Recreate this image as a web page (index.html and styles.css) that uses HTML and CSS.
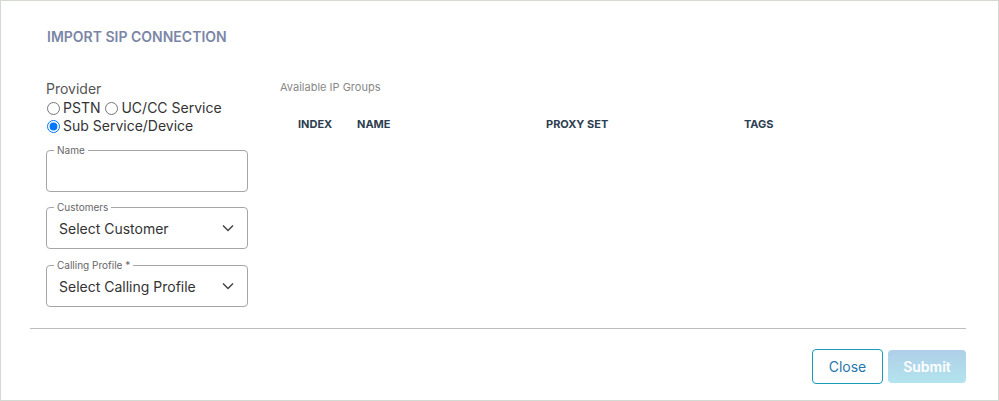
FILE: index.html
```html
<!DOCTYPE html>
<html>
<head>
<meta charset="utf-8">
<link rel="stylesheet" href="styles.css">
</head>
<body>
<div class="dialog">
  <h1 class="title">IMPORT SIP CONNECTION</h1>
  <div class="content">
    <div class="left">
      <div class="provider-label">Provider</div>
      <div class="radios">
        <label class="radio"><input type="radio" name="p">PSTN</label>
        <label class="radio"><input type="radio" name="p">UC/CC Service</label>
        <label class="radio"><input type="radio" name="p" checked>Sub Service/Device</label>
      </div>
      <div class="field field-name">
        <span class="flabel">Name</span>
        <div class="value"></div>
      </div>
      <div class="field field-customers">
        <span class="flabel">Customers</span>
        <div class="value">Select Customer
          <svg class="chev" width="12" height="8" viewBox="0 0 12 8"><path d="M1 1.5 L6 6.5 L11 1.5" fill="none" stroke="#444" stroke-width="1.5"/></svg>
        </div>
      </div>
      <div class="field field-profile">
        <span class="flabel">Calling Profile *</span>
        <div class="value">Select Calling Profile
          <svg class="chev" width="12" height="8" viewBox="0 0 12 8"><path d="M1 1.5 L6 6.5 L11 1.5" fill="none" stroke="#444" stroke-width="1.5"/></svg>
        </div>
      </div>
    </div>
    <div class="right">
      <div class="groups-label">Available IP Groups</div>
      <div class="thead">
        <div class="th">INDEX</div>
        <div class="th">NAME</div>
        <div class="th">PROXY SET</div>
        <div class="th">TAGS</div>
      </div>
    </div>
  </div>
  <div class="divider"></div>
  <div class="footer">
    <button class="btn close">Close</button>
    <button class="btn submit">Submit</button>
  </div>
</div>
</body>
</html>
```
FILE: styles.css
```css
* { box-sizing: border-box; }
html, body { margin: 0; padding: 0; }
body {
  font-family: Inter, "Noto Sans", sans-serif;
  background: #fff;
  width: 999px;
  height: 401px;
}
.dialog {
  width: 999px;
  height: 401px;
  border: 1px solid #d3d9d3;
  padding-top: 27px;
}
.title {
  margin: 0 0 0 46px;
  font-size: 14px;
  font-weight: 600;
  color: #7b86a6;
  line-height: 17px;
}
.content {
  display: flex;
  padding-left: 45px;
  margin-top: 35px;
}
.left {
  width: 202px;
  display: flex;
  flex-direction: column;
  padding-bottom: 21px;
}
.provider-label {
  font-size: 14px;
  color: #555;
  line-height: 18px;
}
.radios {
  width: 200px;
  font-size: 14px;
  color: #333;
  line-height: 18px;
  margin-top: 1px;
}
.radio {
  display: inline-flex;
  align-items: center;
  height: 18px;
  vertical-align: top;
}
.radio input {
  margin: 0 3px 0 1px;
  width: 13px;
  height: 13px;
}
.field {
  position: relative;
  border: 1px solid #a6a6a6;
  border-radius: 4px;
  height: 42px;
  padding: 0 11px 0 12px;
  display: flex;
  align-items: center;
}
.field-name { margin-top: 15px; }
.field-customers { margin-top: 15px; }
.field-profile { margin-top: 16px; }
.flabel {
  position: absolute;
  top: -6px;
  left: 7px;
  padding: 0 3px;
  background: #fff;
  font-size: 10px;
  color: #666;
  line-height: 11px;
}
.value {
  flex: 1;
  display: flex;
  align-items: center;
  justify-content: space-between;
  font-size: 14px;
  color: #333;
  padding-right: 2px;
}
.chev { flex: none; }
.right {
  margin-left: 32px;
  flex: 1;
}
.groups-label {
  font-size: 11px;
  color: #888;
  line-height: 14px;
}
.thead {
  display: grid;
  grid-template-columns: 59px 189px 198px 1fr;
  padding-left: 18px;
  margin-top: 23px;
}
.th {
  font-size: 11px;
  font-weight: 700;
  color: #2d3e50;
  line-height: 14px;
}
.divider {
  height: 1px;
  background: #bdbdbd;
  margin: 0 32px 0 29px;
}
.footer {
  display: flex;
  justify-content: flex-end;
  align-items: flex-start;
  gap: 5px;
  padding-right: 32px;
  margin-top: 20px;
}
.btn {
  font-family: Inter, "Noto Sans", sans-serif;
  font-size: 14px;
  border-radius: 4px;
  cursor: pointer;
}
.close {
  width: 71px;
  height: 35px;
  background: #fff;
  border: 1px solid #1a9ab8;
  color: #2677ad;
}
.submit {
  width: 78px;
  height: 33px;
  margin-top: 1px;
  border: none;
  color: #fff;
  font-weight: 600;
  background: linear-gradient(to bottom, #afcfe8, #b3e4ee);
}
```
